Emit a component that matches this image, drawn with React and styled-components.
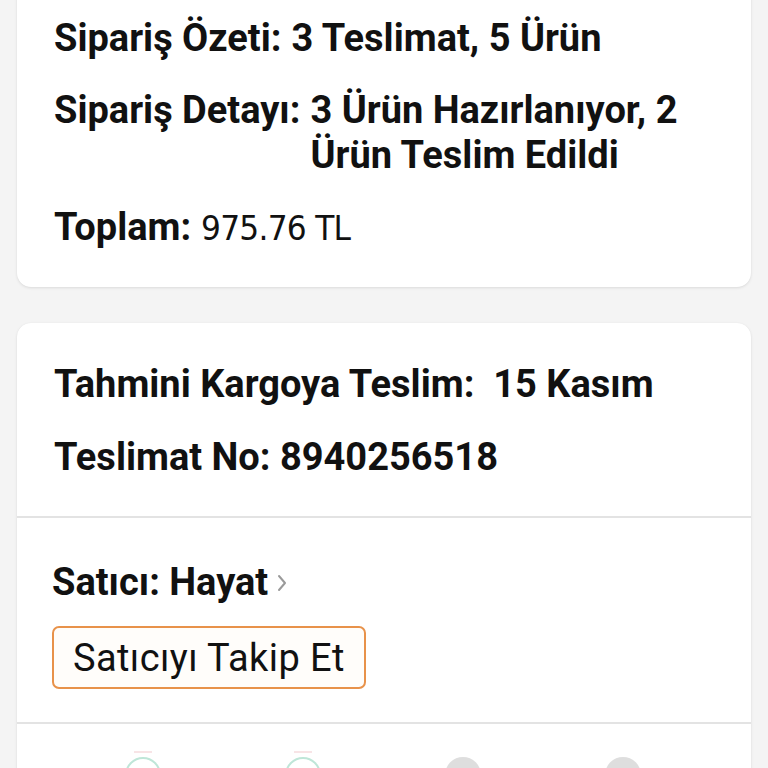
import React from "react";
import styled, { createGlobalStyle } from "styled-components";

const Global = createGlobalStyle`
  html, body { margin: 0; padding: 0; background: #f4f4f4; }
  body { font-family: Roboto, "Noto Sans", sans-serif; color: #111; }
`;

const Page = styled.div`
  display: flex;
  flex-direction: column;
  gap: 36px;
  padding: 0 17px;
  width: 768px;
  box-sizing: border-box;
  height: 768px;
  overflow: hidden;
`;

const Card = styled.div`
  background: #fff;
  border-radius: 14px;
  box-shadow: 0 1px 3px rgba(0, 0, 0, 0.1), 0 0 1px rgba(0, 0, 0, 0.06);
  display: flex;
  flex-direction: column;
  flex-shrink: 0;
  margin-top: ${(p) => p.$offset || 0}px;
`;

const Section = styled.div`
  display: flex;
  flex-direction: column;
  align-items: flex-start;
  gap: ${(p) => p.$gap ?? 28}px;
  padding: ${(p) => p.$pad};
  border-top: ${(p) => (p.$divider ? "2px solid #e3e3e3" : "none")};
`;

const Row = styled.div`
  display: flex;
  gap: 10px;
  font-size: 38px;
  line-height: 45px;
  font-weight: 700;
  width: 100%;
`;

const Label = styled.span`
  white-space: pre;
  flex-shrink: 0;
`;

const Value = styled.span`
  flex: 1;
  min-width: 0;
`;

const Amount = styled.span`
  font-weight: 400;
  font-family: "DejaVu Sans", sans-serif;
  font-size: 34px;
  letter-spacing: -0.8px;
  transform: scaleX(0.92);
  transform-origin: left center;
  display: inline-block;
`;

const SellerLink = styled.div`
  display: flex;
  align-items: center;
  gap: 9px;
  font-size: 38px;
  line-height: 45px;
  font-weight: 700;
`;

const FollowButton = styled.button`
  box-sizing: border-box;
  height: 63px;
  padding: 0 19px 0 19px;
  border: 2px solid #e8924a;
  border-radius: 7px;
  background: #fffdfa;
  font-family: Roboto, sans-serif;
  font-size: 38px;
  letter-spacing: 0.4px;
  font-weight: 400;
  color: #111;
`;

const Steps = styled.div`
  display: flex;
  padding: 27px 0 0 108px;
  gap: 124px;
`;

const Step = styled.div`
  display: flex;
  flex-direction: column;
  align-items: center;
  gap: 4px;
`;

const Tick = styled.div`
  width: 18px;
  height: 2px;
  background: ${(p) => (p.$done ? "#f8e4e6" : "transparent")};
`;

const Dot = styled.div`
  width: 36px;
  height: 36px;
  border-radius: 50%;
  box-sizing: border-box;
  border: ${(p) => (p.$done ? "2px solid #bfe6d8" : "none")};
  background: ${(p) => (p.$done ? "#fff" : "#dedede")};
`;

const Chevron = () => (
  <svg width="10" height="20" viewBox="0 0 10 20" fill="none">
    <path d="M2 3L8 10L2 17" stroke="#9a9a9a" strokeWidth="2" strokeLinecap="round" strokeLinejoin="round" />
  </svg>
);

export default function App() {
  const steps = [true, true, false, false];
  return (
    <>
      <Global />
      <Page>
        <Card $offset={-30}>
          <Section $pad="46px 37px 36px" $gap={27}>
            <Row>
              <Label>Sipariş Özeti:</Label>
              <Value>3 Teslimat, 5 Ürün</Value>
            </Row>
            <Row>
              <Label>Sipariş Detayı:</Label>
              <Value>3 Ürün Hazırlanıyor, 2 Ürün Teslim Edildi</Value>
            </Row>
            <Row>
              <Label>Toplam:</Label>
              <Value>
                <Amount>975.76 TL</Amount>
              </Value>
            </Row>
          </Section>
        </Card>
        <Card>
          <Section $pad="39px 37px 36px" $gap={28}>
            <Row>
              <Label>{"Tahmini Kargoya Teslim:  15 Kasım"}</Label>
            </Row>
            <Row>
              <Label>Teslimat No: 8940256518</Label>
            </Row>
          </Section>
          <Section $divider $pad="42px 35px 33px" $gap={21}>
            <SellerLink>
              Satıcı: Hayat
              <Chevron />
            </SellerLink>
            <FollowButton>Satıcıyı Takip Et</FollowButton>
          </Section>
          <Section $divider $pad="0">
            <Steps>
              {steps.map((d, i) => (
                <Step key={i}>
                  <Tick $done={d} />
                  <Dot $done={d} />
                </Step>
              ))}
            </Steps>
          </Section>
        </Card>
      </Page>
    </>
  );
}
